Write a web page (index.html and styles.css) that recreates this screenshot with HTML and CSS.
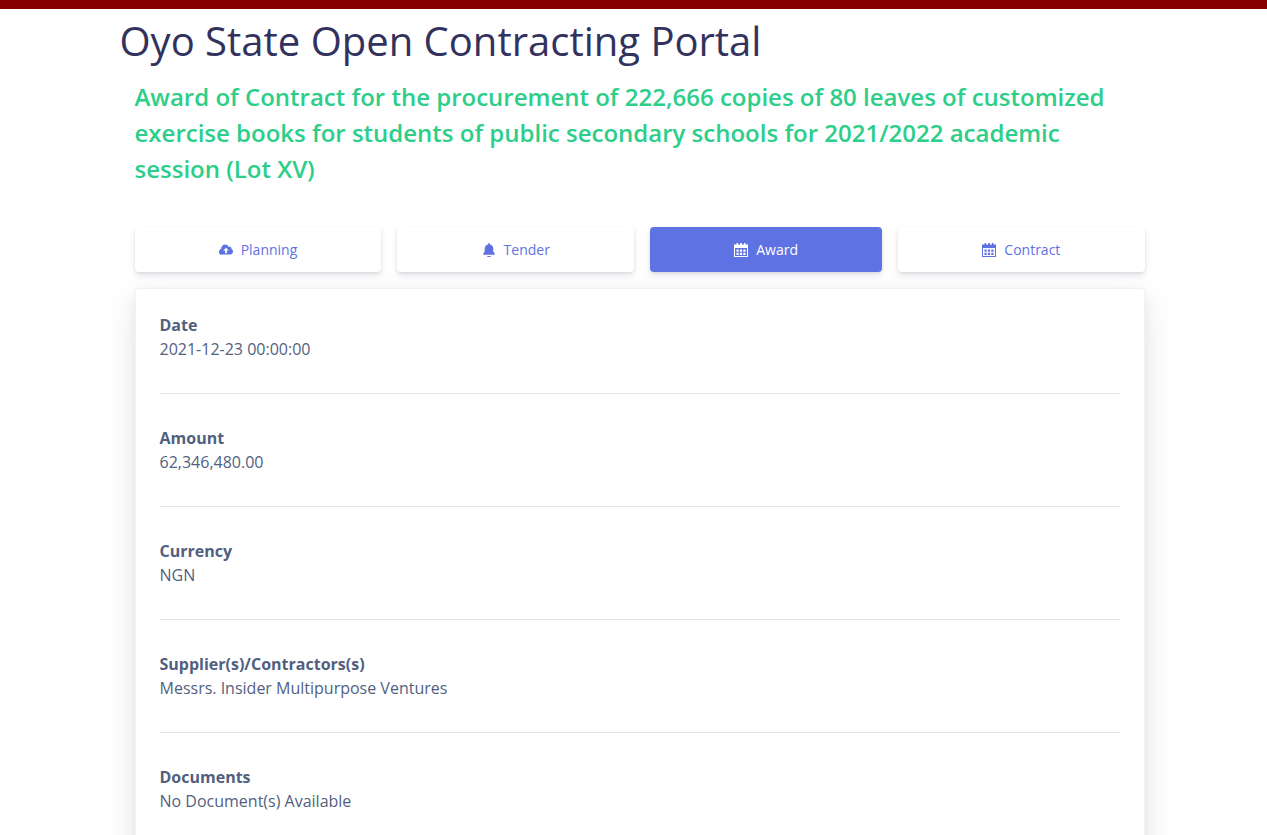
FILE: index.html
```html
<!DOCTYPE html>
<html lang="en">
<head>
<meta charset="utf-8">
<title>Oyo State Open Contracting Portal</title>
<link rel="stylesheet" href="styles.css">
</head>
<body>
<div class="topbar"></div>
<main class="page">
  <h1 class="portal-title">Oyo State Open Contracting Portal</h1>
  <div class="content">
    <h2 class="contract-title">Award of Contract for the procurement of 222,666 copies of 80 leaves of customized exercise books for students of public secondary schools for 2021/2022 academic session (Lot XV)</h2>
    <nav class="tabs">
      <a class="tab" href="#"><svg class="icon" viewBox="0 0 14 14"><path fill-rule="evenodd" d="M6.200 1.400c1.700 0 3.100 1 3.700 2.500.4-.2.800-.3 1.100-.1 1 .2 1.500 1 1.500 1.900 0 .1 0 .3-.1.400 1 .4 1.600 1.300 1.600 2.400 0 1.600-1.200 2.900-2.700 2.900H2.900C1.300 12.400 0 10.900 0 9c0-1.500.9-2.800 2.100-3.200C2.100 3.400 3.900 1.400 6.200 1.400zM7 4.800 4.200 7.600h1.900v2.600h1.800V7.600h1.900L7 4.800z"/></svg>Planning</a>
      <a class="tab" href="#"><svg class="icon" viewBox="0 0 14 14"><path d="M7 0c.5 0 .9.4.9.9v.6c2.300.4 3.400 2.200 3.400 4.500v2.600l1.500 2.200c.2.400 0 .9-.5.900H1.700c-.5 0-.7-.5-.5-.9l1.500-2.200V6c0-2.300 1.100-4.100 3.400-4.500V.9C6.100.4 6.500 0 7 0zM5.300 12.900h3.400V14H5.300z"/></svg>Tender</a>
      <a class="tab tab-active" href="#"><svg class="icon" viewBox="0 0 14 14"><path fill-rule="evenodd" d="M2.500 0h1.500v1.500h2.200V0h1.600v1.500H10V0h1.500v1.500H14V14H0V1.500h2.500V0zM1 5V13h12V5H1zM2.500 6.500h2.200v2.200H2.500V6.500zm3.400 0h2.200v2.200H5.900V6.500zm3.400 0h2.200v2.200H9.300V6.500zM2.500 9.700h2.200v2.200H2.500V9.700zm3.400 0h2.200v2.200H5.900V9.700zm3.400 0h2.200v2.200H9.300V9.700z"/></svg>Award</a>
      <a class="tab" href="#"><svg class="icon" viewBox="0 0 14 14"><path fill-rule="evenodd" d="M2.500 0h1.500v1.500h2.200V0h1.600v1.500H10V0h1.500v1.500H14V14H0V1.500h2.500V0zM1 5V13h12V5H1zM2.500 6.500h2.200v2.200H2.500V6.500zm3.400 0h2.200v2.200H5.900V6.500zm3.400 0h2.200v2.200H9.300V6.500zM2.500 9.700h2.200v2.200H2.500V9.700zm3.400 0h2.200v2.200H5.900V9.700zm3.400 0h2.200v2.200H9.300V9.700z"/></svg>Contract</a>
    </nav>
    <section class="card">
      <div class="field"><strong class="label">Date</strong><span class="value">2021-12-23 00:00:00</span></div>
      <hr class="rule">
      <div class="field"><strong class="label">Amount</strong><span class="value">62,346,480.00</span></div>
      <hr class="rule">
      <div class="field"><strong class="label">Currency</strong><span class="value">NGN</span></div>
      <hr class="rule">
      <div class="field"><strong class="label">Supplier(s)/Contractors(s)</strong><span class="value">Messrs. Insider Multipurpose Ventures</span></div>
      <hr class="rule">
      <div class="field"><strong class="label">Documents</strong><span class="value">No Document(s) Available</span></div>
    </section>
  </div>
</main>
</body>
</html>
```
FILE: styles.css
```css
* { box-sizing: border-box; }
html, body { margin: 0; padding: 0; background: #fff; }
body {
  font-family: "Open Sans", sans-serif;
  font-size: 16px;
  line-height: 24px;
  color: #525f7f;
}
.topbar { height: 9px; background: #850000; }
.page { margin: 0 122.5px 0 119.5px; }
.portal-title {
  margin: 0;
  padding-top: 6px;
  font-size: 40px;
  font-weight: 400;
  line-height: 52px;
  color: #32325d;
}
.content { padding-left: 15px; }
.contract-title {
  margin: 12px 0 0;
  font-size: 24px;
  font-weight: 600;
  line-height: 36px;
  color: #2dce89;
}
.tabs {
  display: flex;
  gap: 16px;
  margin-top: 40px;
}
.tab {
  flex: 1 1 auto;
  display: flex;
  align-items: center;
  justify-content: center;
  height: 45px;
  border-radius: 4px;
  background: #fff;
  color: #5e72e4;
  font-size: 14px;
  font-weight: 500;
  line-height: 21px;
  text-decoration: none;
  box-shadow: 0 4px 6px rgba(50, 50, 93, .11), 0 1px 3px rgba(0, 0, 0, .08);
}
.tab-active { background: #5e72e4; color: #fff; }
.icon { width: 14px; height: 14px; margin-right: 8px; fill: currentColor; }
.card {
  margin-top: 16px;
  padding: 24px;
  min-height: 600px;
  background: #fff;
  border: 1px solid rgba(0, 0, 0, .05);
  border-radius: 4px;
  box-shadow: 0 15px 35px rgba(50, 50, 93, .1), 0 5px 15px rgba(0, 0, 0, .07);
}
.field { display: flex; flex-direction: column; }
.label { font-weight: 700; }
.rule {
  height: 1px;
  margin: 32px 0;
  border: 0;
  background: rgba(0, 0, 0, .1);
}
```
